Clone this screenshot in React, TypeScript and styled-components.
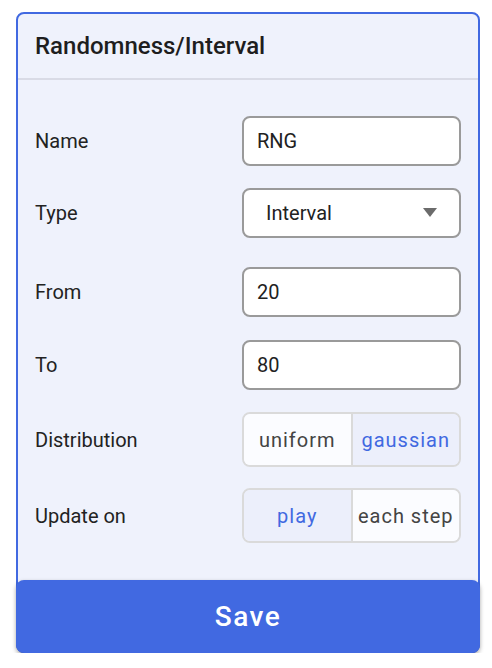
import styled, { createGlobalStyle } from 'styled-components';

const GlobalStyle = createGlobalStyle`
  body {
    margin: 0;
    background: #ffffff;
    font-family: Roboto, "Liberation Sans", sans-serif;
  }
`;

const Card = styled.div`
  box-sizing: border-box;
  width: 464px;
  margin: 12px 0 0 16px;
  border: 2px solid #4169e1;
  border-radius: 8px;
  background: #eff2fc;
  display: flex;
  flex-direction: column;
`;

const Header = styled.div`
  height: 64px;
  display: flex;
  align-items: center;
  padding: 0 17px;
  border-bottom: 2px solid #d9dbe6;
  font-size: 24px;
  font-weight: 500;
  color: #1e1e1e;
`;

const Form = styled.div`
  display: flex;
  flex-direction: column;
  padding: 36px 17px 0 17px;
`;

const Row = styled.div<{ $after?: number }>`
  display: flex;
  align-items: center;
  justify-content: space-between;
  margin-bottom: ${(p) => p.$after ?? 23}px;
`;

const Label = styled.span`
  font-size: 20px;
  line-height: 24px;
  color: #222;
`;

const Input = styled.div`
  box-sizing: border-box;
  width: 219px;
  height: 50px;
  border: 2px solid #9a9a9a;
  border-radius: 8px;
  background: #fff;
  display: flex;
  align-items: center;
  justify-content: space-between;
  padding: 0 22px 0 13px;
  font-size: 20px;
  color: #222;
`;

const SelectBox = styled(Input)`
  padding-left: 22px;
`;

const Segmented = styled.div`
  box-sizing: border-box;
  width: 219px;
  height: 55px;
  border: 2px solid #dadada;
  border-radius: 8px;
  display: flex;
  overflow: hidden;
`;

const Segment = styled.div<{ $active?: boolean }>`
  flex: 1;
  display: flex;
  align-items: center;
  justify-content: center;
  font-size: 20px;
  letter-spacing: 1px;
  white-space: nowrap;
  color: ${(p) => (p.$active ? '#4169e1' : '#444')};
  background: ${(p) => (p.$active ? '#eceffb' : '#fbfcff')};
  & + & {
    border-left: 2px solid #dadada;
  }
`;

const SaveButton = styled.button`
  margin: 0 -2px -2px -2px;
  height: 73px;
  border: none;
  border-radius: 8px;
  background: #4169e1;
  color: #fff;
  font-family: Roboto, "Liberation Sans", sans-serif;
  font-size: 28px;
  font-weight: 500;
  letter-spacing: 1.5px;
  box-shadow: 0 2px 4px rgba(0, 0, 0, 0.35);
  cursor: pointer;
`;

const Caret = () => (
  <svg width="14" height="10" viewBox="0 0 14 10">
    <path d="M0 0 H14 L7 9 Z" fill="#6b6b6b" />
  </svg>
);

export default function App() {
  return (
    <>
      <GlobalStyle />
      <Card>
        <Header>Randomness/Interval</Header>
        <Form>
          <Row $after={22}>
            <Label>Name</Label>
            <Input>RNG</Input>
          </Row>
          <Row $after={29}>
            <Label>Type</Label>
            <SelectBox>
              Interval
              <Caret />
            </SelectBox>
          </Row>
          <Row>
            <Label>From</Label>
            <Input>20</Input>
          </Row>
          <Row $after={22}>
            <Label>To</Label>
            <Input>80</Input>
          </Row>
          <Row $after={21}>
            <Label>Distribution</Label>
            <Segmented>
              <Segment>uniform</Segment>
              <Segment $active>gaussian</Segment>
            </Segmented>
          </Row>
          <Row $after={37}>
            <Label>Update on</Label>
            <Segmented>
              <Segment $active>play</Segment>
              <Segment>each step</Segment>
            </Segmented>
          </Row>
        </Form>
        <SaveButton>Save</SaveButton>
      </Card>
    </>
  );
}
